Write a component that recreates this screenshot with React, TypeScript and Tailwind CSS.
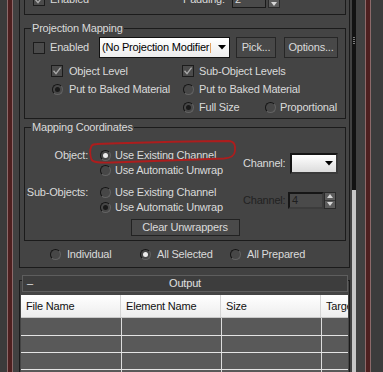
import React from "react";

function Radio({ on, light }: { on?: boolean; light?: boolean }) {
  return (
    <span className="flex h-[11px] w-[11px] shrink-0 items-center justify-center rounded-full border border-t-[#151515] border-l-[#151515] border-r-[#626262] border-b-[#626262] bg-[#474747]">
      {on && (
        <span
          className={
            light
              ? "h-[5px] w-[5px] rounded-full bg-[#ececec]"
              : "h-[5px] w-[5px] rounded-full bg-[#1a1a1a]"
          }
        />
      )}
    </span>
  );
}

function RadioSlot({ on, light }: { on?: boolean; light?: boolean }) {
  return (
    <span className="flex w-[12px] shrink-0 justify-end">
      <Radio on={on} light={light} />
    </span>
  );
}

function Check({ on }: { on?: boolean }) {
  return (
    <span className="flex h-[12px] w-[12px] shrink-0 items-center justify-center border border-[#1c1c1c] bg-[#4b4b4b]">
      {on && (
        <svg width="10" height="10" viewBox="0 0 10 10">
          <path d="M1.5 4.8 L4 7.6 L8.6 1.6" stroke="#a8a8a8" strokeWidth="1.4" fill="none" />
        </svg>
      )}
    </span>
  );
}

function Group({
  title,
  className,
  children,
}: {
  title?: string;
  className: string;
  children: React.ReactNode;
}) {
  return (
    <div className={"relative border border-[#1b1b1b] " + className}>
      {title && (
        <span className="absolute -top-[7px] left-[6px] bg-[#444444] px-[1px] leading-[13px]">
          {title}
        </span>
      )}
      {children}
    </div>
  );
}

function Caret({ color }: { color: string }) {
  return (
    <svg width="8" height="5" viewBox="0 0 8 5">
      <path d="M0 0 L8 0 L4 4.5 Z" fill={color} />
    </svg>
  );
}

function Spinner({ h }: { h: string }) {
  return (
    <span className={"flex w-[12px] flex-col border border-[#2a2a2a] bg-[#5c5c5c] " + h}>
      <span className="flex flex-1 items-center justify-center border-b border-[#3a3a3a]">
        <svg width="6" height="4" viewBox="0 0 6 4">
          <path d="M0 4 L6 4 L3 0 Z" fill="#d8d8d8" />
        </svg>
      </span>
      <span className="flex flex-1 items-center justify-center">
        <svg width="6" height="4" viewBox="0 0 6 4">
          <path d="M0 0 L6 0 L3 4 Z" fill="#d8d8d8" />
        </svg>
      </span>
    </span>
  );
}

export default function App() {
  const rows = [18, 17, 17, 17];
  return (
    <div className="relative flex h-[372px] w-[383px] overflow-hidden bg-[#3c3c3c] font-['Liberation_Sans',Arial,sans-serif] text-[11px] leading-[13px] tracking-[-0.2px] text-[#dadada]">
      <div className="w-[7px] shrink-0 bg-[#3b3b3b]" />
      <div className="w-[1px] shrink-0 bg-[#8c6a6a]" />
      <div className="w-[4px] shrink-0 bg-[#4e2020]" />
      <div className="w-[1px] shrink-0 bg-[#8c6a6a]" />

      <div className="flex w-[339px] shrink-0 flex-col bg-[#414141]">
        {/* Rollout 1 */}
        <div className="ml-[6px] w-[331px] border-x border-b border-[#1b1b1b] bg-[#444444] pl-[4px] pr-[3px]">
          {/* top partial group */}
          <Group className="-mt-[16px] h-[31px]">
            <div className="flex h-full items-center pl-[8px]">
              <div className="flex w-[150px] items-center">
                <Check on />
                <span className="ml-[5px]">Enabled</span>
              </div>
              <span className="w-[49px]">Padding:</span>
              <span className="flex h-[17px] w-[34px] items-center border border-[#1a1a1a] bg-[#4a4a4a] pl-[2px]">
                2
              </span>
              <span className="ml-[2px]">
                <Spinner h="h-[17px]" />
              </span>
            </div>
          </Group>

          {/* Projection Mapping */}
          <Group title="Projection Mapping" className="mt-[13px] h-[91px] pt-[8px]">
            <div className="flex h-[21px] items-center pl-[8px]">
              <Check />
              <span className="ml-[5px] w-[49px]">Enabled</span>
              <span className="flex h-[21px] w-[131px] items-center justify-between border border-[#111111] bg-gradient-to-b from-[#ffffff] to-[#ececec] pl-[2px] pr-[3px] text-[#000000]">
                <span className="flex items-center">
                  (No Projection Modifier
                  <span className="ml-[1px] h-[10px] w-[1px] bg-[#e0a060]" />
                </span>
                <Caret color="#000" />
              </span>
              <span className="ml-[6px] flex h-[21px] w-[40px] items-center justify-center border border-[#262626] bg-[#484848]">
                Pick...
              </span>
              <span className="ml-[8px] flex h-[21px] w-[54px] items-center justify-center border border-[#262626] bg-[#484848]">
                Options...
              </span>
            </div>
            <div className="mt-[4px] flex h-[18px] items-center pl-[26px]">
              <div className="flex w-[131px] items-center">
                <Check on />
                <span className="ml-[6px]">Object Level</span>
              </div>
              <div className="flex items-center">
                <Check on />
                <span className="ml-[5px]">Sub-Object Levels</span>
              </div>
            </div>
            <div className="flex h-[18px] items-center pl-[26px]">
              <div className="flex w-[131px] items-center">
                <RadioSlot on />
                <span className="ml-[6px]">Put to Baked Material</span>
              </div>
              <div className="flex items-center">
                <RadioSlot />
                <span className="ml-[5px]">Put to Baked Material</span>
              </div>
            </div>
            <div className="flex h-[18px] items-center pl-[26px]">
              <div className="w-[131px]" />
              <div className="flex w-[82px] items-center">
                <RadioSlot on />
                <span className="ml-[5px]">Full Size</span>
              </div>
              <div className="flex items-center">
                <RadioSlot />
                <span className="ml-[4px]">Proportional</span>
              </div>
            </div>
          </Group>

          {/* Mapping Coordinates */}
          <Group title="Mapping Coordinates" className="mt-[8px] h-[114px] pt-[20px]">
            <div className="flex h-[30px]">
              <div className="w-[75px] pr-[12px] text-right">
                <div className="flex h-[15px] items-center justify-end">Object:</div>
              </div>
              <div className="w-[143px]">
                <div className="flex h-[15px] items-center">
                  <Radio on light />
                  <span className="ml-[4px]">Use Existing Channel</span>
                </div>
                <div className="flex h-[15px] items-center">
                  <Radio />
                  <span className="ml-[4px]">Use Automatic Unwrap</span>
                </div>
              </div>
              <div className="flex items-center">
                <span className="w-[47px]">Channel:</span>
                <span className="flex h-[21px] w-[48px] items-center justify-end border-2 border-[#151515] border-r-[#3a3a3a] border-b-[#3a3a3a] bg-gradient-to-b from-[#ffffff] to-[#dcdcdc] pr-[3px]">
                  <Caret color="#000" />
                </span>
              </div>
            </div>
            <div className="mt-[7px] flex h-[30px]">
              <div className="w-[75px] pr-[12px] text-right">
                <div className="flex h-[15px] items-center justify-end">Sub-Objects:</div>
              </div>
              <div className="w-[143px]">
                <div className="flex h-[15px] items-center">
                  <Radio />
                  <span className="ml-[4px]">Use Existing Channel</span>
                </div>
                <div className="flex h-[15px] items-center">
                  <Radio on />
                  <span className="ml-[4px]">Use Automatic Unwrap</span>
                </div>
              </div>
              <div className="flex items-center">
                <span className="w-[45px] text-[#222222]">Channel:</span>
                <span className="flex h-[17px] w-[36px] items-center border-2 border-[#161616] border-r-[#3c3c3c] border-b-[#3c3c3c] bg-[#4a4a4a] pl-[2px] text-[#1e1e1e]">
                  4
                </span>
                <Spinner h="h-[17px]" />
              </div>
            </div>
            <div className="mx-auto mt-[4px] flex h-[17px] w-[109px] items-center justify-center border border-[#222222] bg-[#4a4a4a]">
              Clear Unwrappers
            </div>
          </Group>

          {/* radio row */}
          <div className="flex h-[26px] items-center pl-[26px]">
            <div className="flex w-[90px] items-center">
              <Radio />
              <span className="ml-[6px]">Individual</span>
            </div>
            <div className="flex w-[90px] items-center">
              <Radio on light />
              <span className="ml-[6px]">All Selected</span>
            </div>
            <div className="flex items-center">
              <Radio />
              <span className="ml-[6px]">All Prepared</span>
            </div>
          </div>
        </div>

        {/* Rollout 2: Output */}
        <div className="ml-[6px] mt-[12px] flex w-[331px] flex-1 flex-col border-x border-t border-[#1b1b1b] bg-[#444444]">
          <div className="-mt-[6px] ml-[2px] mr-[1px] grid h-[17px] grid-cols-[1fr_auto_1fr] items-center border border-[#5e5e5e] bg-[#3d3d3d] px-[4px] text-[#e0e0e0]">
            <span>–</span>
            <span>Output</span>
            <span />
          </div>
          <div className="ml-[1px] mr-[1px] mt-[3px] flex flex-col overflow-hidden">
            <div className="grid h-[23px] grid-cols-[100px_100px_100px_100px] border-b border-[#c8c8c8] bg-gradient-to-b from-[#ffffff] to-[#ededed] text-[#111111]">
              <span className="flex items-center border-r border-[#d4d4d4] pl-[5px]">File Name</span>
              <span className="flex items-center border-r border-[#d4d4d4] pl-[5px]">Element Name</span>
              <span className="flex items-center border-r border-[#d4d4d4] pl-[5px]">Size</span>
              <span className="flex items-center pl-[5px]">Target</span>
            </div>
            {rows.map((h, i) => (
              <div
                key={i}
                className={
                  (h === 18 ? "h-[18px] " : "h-[17px] ") +
                  "grid grid-cols-[100px_100px_100px_100px] border-b border-[#e4e4e4] bg-[#595959]"
                }
              >
                <span />
                <span className="border-l border-[#dcdcdc]" />
                <span className="border-l border-[#dcdcdc]" />
                <span className="border-l border-[#dcdcdc]" />
              </div>
            ))}
          </div>
        </div>
      </div>

      {/* scrollbar */}
      <div className="flex w-[4px] shrink-0 flex-col">
        <div className="flex h-[190px] flex-col items-center gap-[1px] bg-[#121212] pt-[37px]">
          <span className="h-[1px] w-[2px] bg-[#7a7a7a]" />
          <span className="h-[1px] w-[2px] bg-[#7a7a7a]" />
          <span className="h-[1px] w-[2px] bg-[#7a7a7a]" />
          <span className="h-[1px] w-[2px] bg-[#7a7a7a]" />
        </div>
        <div className="flex-1 bg-[#c6c6c6]" />
      </div>
      <div className="w-[9px] shrink-0 bg-[#414141]" />
      <div className="w-[1px] shrink-0 bg-[#8c6a6a]" />
      <div className="w-[4px] shrink-0 bg-[#4e2020]" />
      <div className="w-[1px] shrink-0 bg-[#8c6a6a]" />
      <div className="flex-1 bg-[#3c3c3c]" />

      <svg
        className="pointer-events-none absolute left-0 top-0"
        width="383"
        height="372"
        viewBox="0 0 383 372"
      >
        <path
          d="M97 144 C140 142.5 190 141 229 141 C235 141.5 235.5 146 235 151 C234.5 156 231 158 224 158.5 C180 160 140 161.5 112 162.5 C99 163 93 162.5 91.5 159.5 C90 155 90 149 91.5 146 C92.5 144.5 94.5 144 97 144 Z"
          stroke="#ad1d1d"
          strokeWidth="1.8"
          fill="none"
        />
      </svg>
    </div>
  );
}
